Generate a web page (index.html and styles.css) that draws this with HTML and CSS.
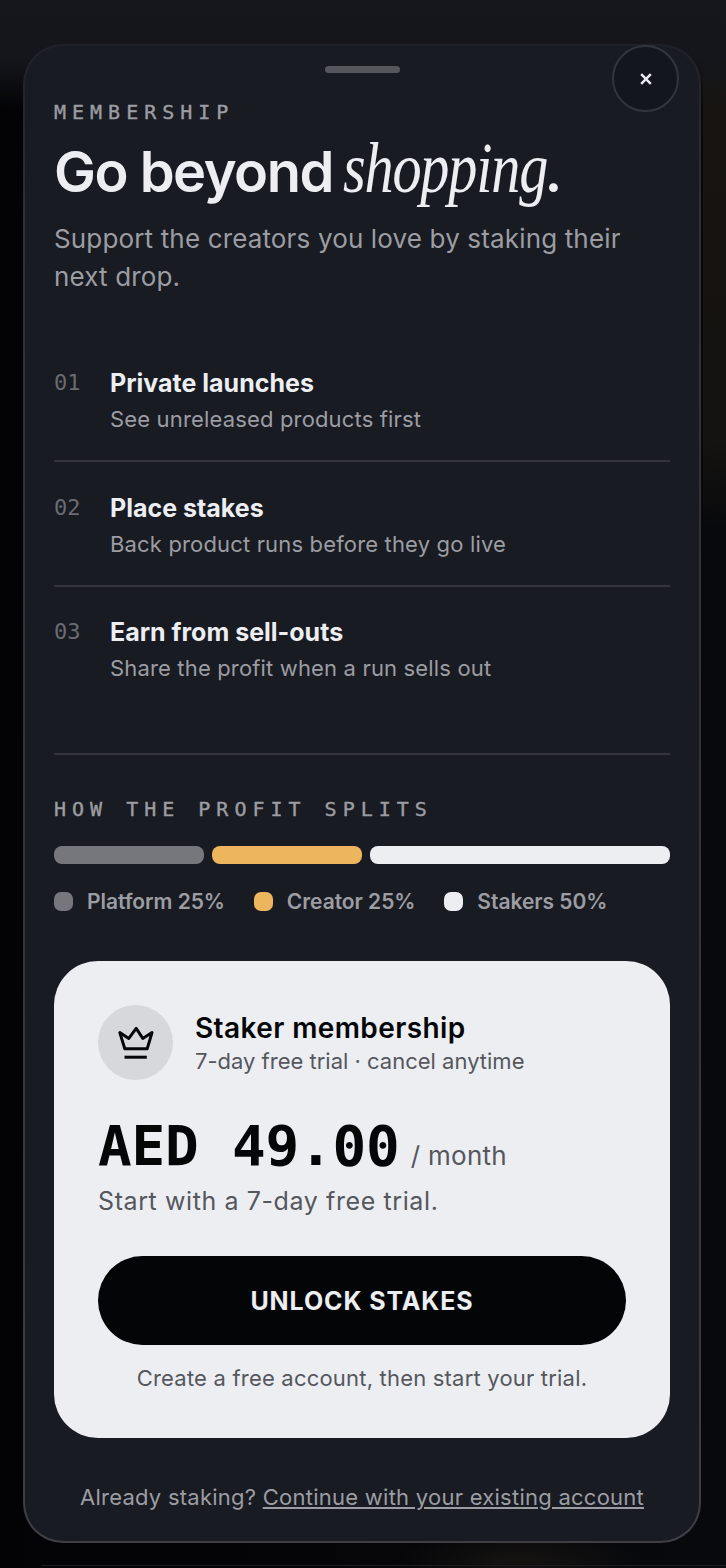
FILE: index.html
```html
<!DOCTYPE html>
<html lang="en">
<head>
<meta charset="utf-8">
<title>Membership</title>
<link rel="stylesheet" href="styles.css">
</head>
<body>
<main class="sheet">
  <div class="handle"></div>
  <button class="close" aria-label="Close"><svg viewBox="0 0 12 12" width="12" height="12"><path d="M1.2 1.2 10.8 10.8M10.8 1.2 1.2 10.8"/></svg></button>
  <header class="intro">
    <p class="eyebrow">MEMBERSHIP</p>
    <h1 class="headline">Go beyond <em>shopping</em>.</h1>
    <p class="lede">Support the creators you love by staking their next drop.</p>
  </header>
  <ol class="perks">
    <li class="perk"><span class="num">01</span><div><h2>Private launches</h2><p>See unreleased products first</p></div></li>
    <li class="perk"><span class="num">02</span><div><h2>Place stakes</h2><p>Back product runs before they go live</p></div></li>
    <li class="perk"><span class="num">03</span><div><h2>Earn from sell-outs</h2><p>Share the profit when a run sells out</p></div></li>
  </ol>
  <section class="split">
    <p class="eyebrow">HOW THE PROFIT SPLITS</p>
    <div class="bar"><span class="seg grey"></span><span class="seg gold"></span><span class="seg white wide"></span></div>
    <div class="legend">
      <span class="key"><i class="dot grey"></i>Platform 25%</span>
      <span class="key"><i class="dot gold"></i>Creator 25%</span>
      <span class="key"><i class="dot white"></i>Stakers 50%</span>
    </div>
  </section>
  <section class="card">
    <div class="plan">
      <div class="badge"><svg viewBox="0 0 40 40" width="40" height="40"><path d="M3.8 9.6 12.8 15.4 20.2 5.4 26.8 15.4 36 9.6 31.2 25.8H8.8Z"/><path d="M8.5 34.2H30.8"/></svg></div>
      <div><h3>Staker membership</h3><p>7-day free trial · cancel anytime</p></div>
    </div>
    <div class="price"><strong>AED 49.00</strong><span>/ month</span></div>
    <p class="trial">Start with a 7-day free trial.</p>
    <button class="cta">UNLOCK STAKES</button>
    <p class="note">Create a free account, then start your trial.</p>
  </section>
  <p class="foot">Already staking? <a href="#">Continue with your existing account</a></p>
</main>
</body>
</html>
```
FILE: styles.css
```css
* { box-sizing: border-box; }
html, body { margin: 0; height: 1568px; overflow: hidden; }
body {
  font-family: "Inter", "Liberation Sans", sans-serif;
  background:
    linear-gradient(90deg, #1c1d20, #1c1d20) 42px 1565px / 684px 1px no-repeat,
    radial-gradient(120px 30px at 520px 1560px, rgba(60, 52, 40, .28), transparent),
    linear-gradient(180deg, #15171d 0, #14161b 60px, rgba(20, 22, 27, 0) 110px),
    linear-gradient(180deg, rgba(24, 21, 17, .95) 90px, rgba(22, 20, 17, .9) 440px, rgba(8, 9, 12, 0) 530px) 703px 0 / 23px 100% no-repeat,
    linear-gradient(90deg, #030305 0, #050507 40%, #08090c 100%);
  padding: 44px 25px 0 23px;
  color: #eceef2;
}
h1, h2, h3, p, ol { margin: 0; padding: 0; }
.sheet {
  position: relative;
  height: 1499px;
  background:
    linear-gradient(#181b22, #181b22) padding-box,
    linear-gradient(180deg, #1f2128 0, #2f3138 12%, #33353b 60%, #3d3f45 100%) border-box;
  border: 2px solid transparent;
  border-radius: 40px;
  padding: 20px 29px 0;
}
.handle { width: 75px; height: 7px; margin: 0 auto; background: #55575d; border-radius: 4px; }
.close {
  position: absolute; top: -1px; right: 20px;
  width: 67px; height: 67px;
  display: flex; align-items: center; justify-content: center;
  background: #14161d; border: 2px solid #33353c; border-radius: 50%;
}
.close svg { fill: none; stroke: #eceef2; stroke-width: 2.4; }
.intro { padding-top: 30px; }
.eyebrow {
  font: 400 20px/18px "DejaVu Sans Mono", monospace;
  -webkit-text-stroke: .4px #9c9da2;
  letter-spacing: 6px;
  color: #9c9da2;
}
.headline {
  margin-top: 14px;
  font-size: 56px; line-height: 66px; font-weight: 600; letter-spacing: -1.5px;
  color: #eceef2;
  white-space: nowrap;
}
.headline em {
  display: inline-block;
  font: italic 400 72px/66px "Liberation Serif", serif;
  transform: scaleX(.81);
  transform-origin: left center;
  margin-right: -50px;
  margin-left: -3px;
}
.lede { margin-top: 15px; font-size: 26px; line-height: 38px; color: #9c9da2; letter-spacing: .15px; }
.perks { list-style: none; margin-top: 72px; border-bottom: 2px solid #33353b; padding-bottom: 71px; }
.perk { display: flex; }
.perk + .perk { margin-top: 27px; border-top: 2px solid #33353b; padding-top: 30.5px; }
.num { width: 56px; font: 400 22px/30px "DejaVu Sans Mono", monospace; color: #6a6c72; }
.perk h2 { font-size: 25px; line-height: 30px; font-weight: 700; color: #eceef2; letter-spacing: 0; }
.perk p { margin-top: 7px; font-size: 22px; line-height: 28px; color: #9c9da2; letter-spacing: .16px; }
.split { margin-top: 45px; }
.bar { display: flex; gap: 8px; margin-top: 28px; }
.seg { flex: 1; height: 18px; border-radius: 8px; }
.seg.wide { flex: 2; }
.grey { background: #76777c; }
.gold { background: #eeb55f; }
.white { background: #eceef2; }
.legend { display: flex; gap: 29px; margin-top: 28px; }
.key { display: flex; align-items: center; gap: 14px; font-size: 21px; line-height: 19px; font-weight: 600; color: #9c9da2; letter-spacing: -.05px; }
.dot { width: 19px; height: 19px; border-radius: 7px; }
.card {
  margin-top: 50px;
  height: 477px;
  background: #eceef2;
  border-radius: 44px;
  padding: 44px;
  color: #55575d;
}
.plan { display: flex; align-items: center; gap: 22px; }
.badge {
  width: 75px; height: 75px; border-radius: 50%;
  background: #d7d8dc;
  display: flex; align-items: center; justify-content: center;
}
.badge svg { fill: none; stroke: #050608; stroke-width: 3; stroke-linejoin: round; }
.plan h3 { font-size: 28px; line-height: 32px; font-weight: 600; color: #050608; letter-spacing: .4px; margin-top: 3px; }
.plan p { margin-top: 2px; font-size: 22px; line-height: 30px; letter-spacing: 0; }
.price { display: flex; align-items: baseline; gap: 11px; margin-top: 31px; }
.price strong { font: 700 56px/70px "DejaVu Sans Mono", monospace; color: #050608; letter-spacing: -.2px; }
.price span { font-size: 26px; letter-spacing: .3px; }
.trial { margin-top: 3px; font-size: 25px; line-height: 34px; letter-spacing: .6px; }
.cta {
  display: block; width: 100%; height: 89px; margin-top: 38px; padding-top: 2px;
  background: #040507; color: #eceef2; border: 0; border-radius: 45px;
  font: 700 25px/1 "Inter", sans-serif; letter-spacing: .9px;
}
.note { margin-top: 19px; text-align: center; font-size: 22px; line-height: 28px; letter-spacing: .2px; }
.foot { margin-top: 45px; text-align: center; font-size: 22px; line-height: 28px; color: #9c9da2; letter-spacing: .25px; }
.foot a { color: inherit; }
```
